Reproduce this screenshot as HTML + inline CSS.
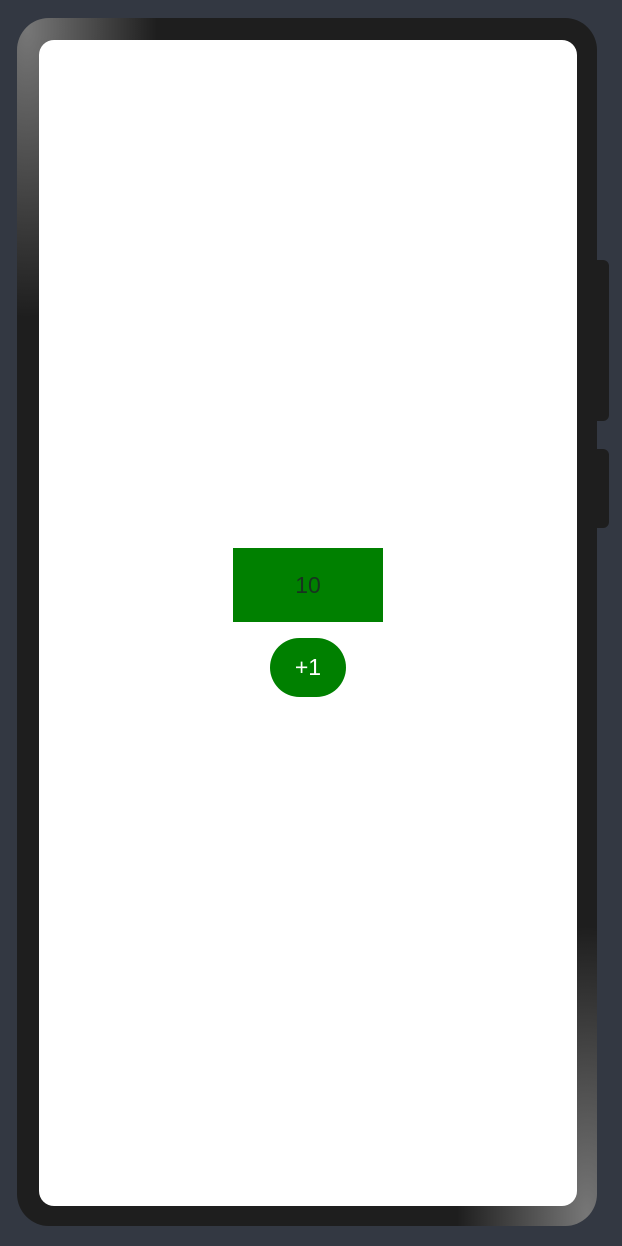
<!DOCTYPE html>
<html><head><style>
html,body{margin:0;padding:0;}
body{width:622px;height:1246px;background:#333842;position:relative;overflow:hidden;font-family:"Liberation Sans",sans-serif;}
.frame{position:absolute;left:17px;top:18px;width:580px;height:1208px;border-radius:32px;background:
radial-gradient(ellipse 130px 290px at 10px 10px,#777 0%,rgba(30,30,30,0) 100%),
radial-gradient(ellipse 130px 290px at 570px 1198px,#777 0%,rgba(30,30,30,0) 100%),#1e1e1e;}
.screen{position:absolute;left:39px;top:40px;width:538px;height:1166px;border-radius:15px;background:#fff;}
.btn{position:absolute;left:593px;width:16px;background:#1e1e1e;border-radius:0 6px 6px 0;}
.box{position:absolute;left:233px;top:548px;width:150px;height:74px;background:#008000;color:#17331f;font-size:23px;display:flex;align-items:center;justify-content:center;}
.plus{position:absolute;left:270px;top:638px;width:76px;height:59px;border-radius:30px;background:#008000;color:#fff;font-size:23px;display:flex;align-items:center;justify-content:center;}
</style></head><body>
<div class="btn" style="top:260px;height:161px"></div>
<div class="btn" style="top:449px;height:79px"></div>
<div class="frame"></div>
<div class="screen"></div>
<div class="box">10</div>
<div class="plus">+1</div>
</body></html>
